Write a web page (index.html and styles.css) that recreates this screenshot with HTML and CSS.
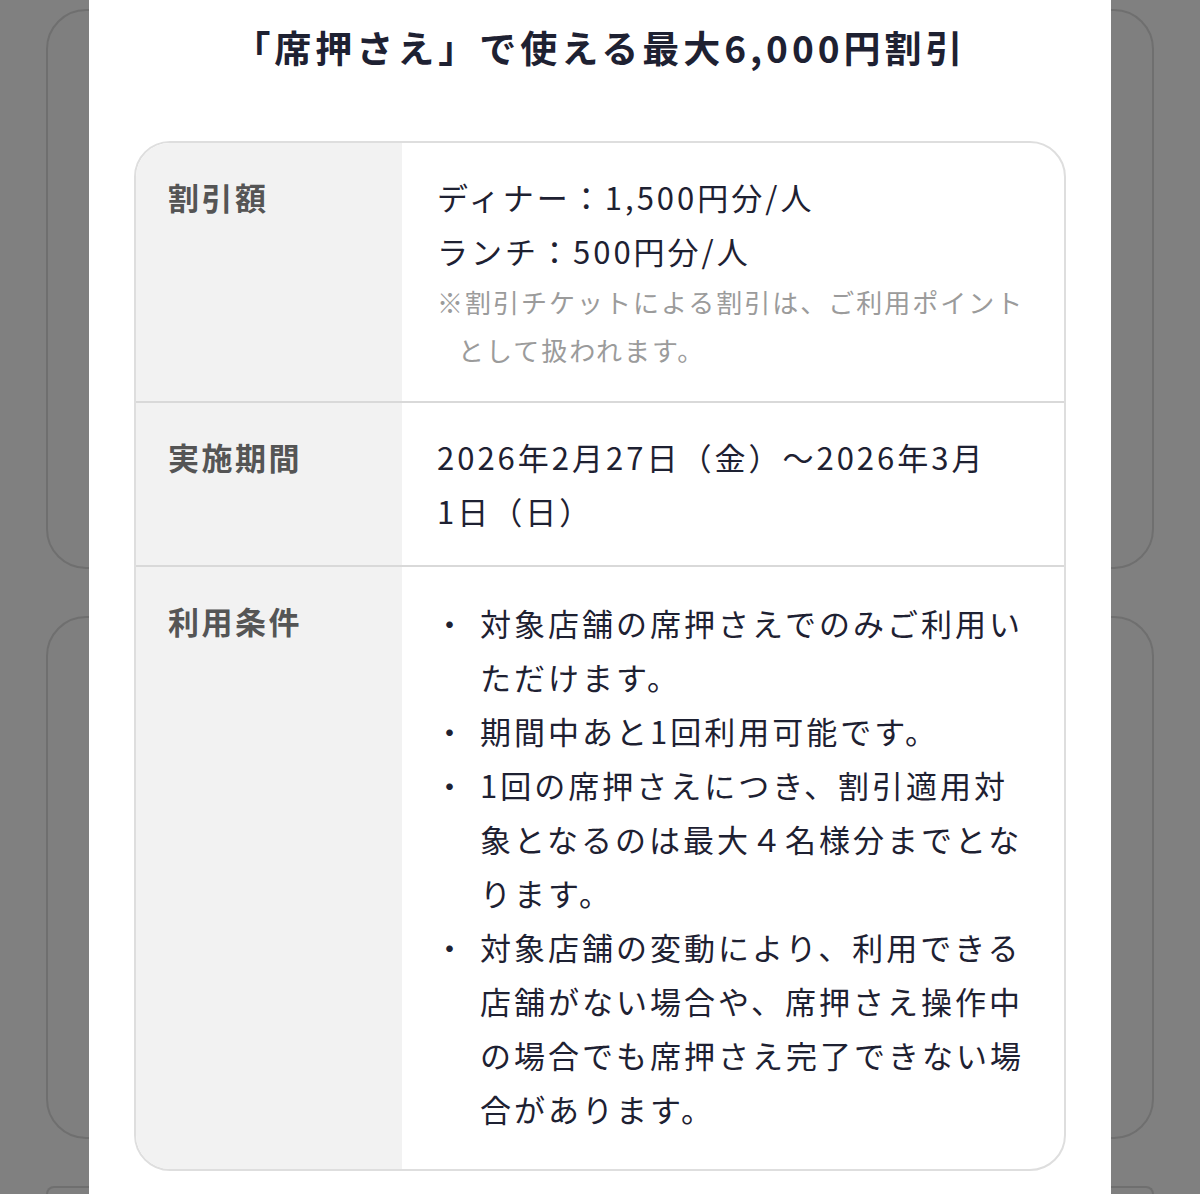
FILE: index.html
```html
<!DOCTYPE html>
<html lang="ja">
<head>
    <meta charset="UTF-8">
    <meta name="viewport" content="width=device-width, initial-scale=1.0">
    <title>席押さえ割引</title>
    <link rel="stylesheet" href="styles.css">
</head>
<body>
    <!-- 背面のクーポン一覧 -->
    <div class="page">
        <div class="coupon-card tall"></div>
        <div class="coupon-card"></div>
        <div class="coupon-card short"></div>
    </div>

    <!-- 割引詳細モーダル -->
    <div class="modal">
        <h1 class="modal-title">「席押さえ」で使える最大6,000円割引</h1>

        <div class="detail-table">
            <div class="detail-row">
                <div class="detail-label">割引額</div>
                <div class="detail-value">
                    <p>ディナー：1,500円分/人</p>
                    <p>ランチ：500円分/人</p>
                    <p class="note">※割引チケットによる割引は、ご利用ポイントとして扱われます。</p>
                </div>
            </div>
            <div class="detail-row">
                <div class="detail-label">実施期間</div>
                <div class="detail-value">
                    <p>2026年2月27日（金）～2026年3月<span class="nowrap">1日</span>（日）</p>
                </div>
            </div>
            <div class="detail-row">
                <div class="detail-label">利用条件</div>
                <div class="detail-value">
                    <ul class="terms">
                        <li>対象店舗の席押さえでのみご利用いただけます。</li>
                        <li>期間中あと1回利用可能です。</li>
                        <li>1回の席押さえにつき、割引適用対象となるのは最大４名様分までとなります。</li>
                        <li>対象店舗の変動により、利用できる店舗がない場合や、席押さえ操作中の場合でも席押さえ完了できない場合があります。</li>
                    </ul>
                </div>
            </div>
        </div>
    </div>
</body>
</html>
```

FILE: styles.css
```css
* {
    margin: 0;
    padding: 0;
    box-sizing: border-box;
    font-family: "Noto Sans CJK JP", "Noto Sans", sans-serif;
}

html,
body {
    height: 1194px;
    overflow: hidden;
}

body {
    background: #808080;
}

/* 背面のカード一覧 */
.page {
    display: flex;
    flex-direction: column;
    gap: 47px;
    padding: 9px 46px 0;
}

.coupon-card {
    height: 523px;
    border: 2px solid #6f6f6f;
    border-radius: 40px;
    background: #7f7f7f;
}

.coupon-card.tall {
    height: 560px;
}

.coupon-card.short {
    height: 8px;
    border-bottom: none;
    border-radius: 40px 40px 0 0;
}

/* モーダル */
.modal {
    position: fixed;
    top: 0;
    bottom: 0;
    left: 89px;
    width: 1022px;
    background: #fff;
    padding: 23px 45px 0;
}

.modal-title {
    text-align: center;
    font-size: 37px;
    font-weight: 700;
    line-height: 48px;
    letter-spacing: 4px;
    color: #1e2132;
    margin-bottom: 70px;
}

.detail-table {
    border: 2px solid #dedede;
    border-radius: 36px;
    overflow: hidden;
}

.detail-row {
    display: grid;
    grid-template-columns: 266px 1fr;
}

.detail-row + .detail-row {
    border-top: 2px solid #d9d9d9;
}

.detail-label,
.detail-value {
    padding: 27px 34px 27px 32px;
    font-size: 31px;
    line-height: 54px;
    letter-spacing: 3px;
}

.detail-label {
    background: #f2f2f2;
    font-weight: 700;
    color: #555;
    letter-spacing: 2.5px;
}

.detail-value {
    padding-left: 35px;
    color: #1e2132;
}

.nowrap {
    white-space: nowrap;
}

.note {
    font-size: 26px;
    line-height: 48px;
    letter-spacing: 2px;
    color: #9b9b9b;
    padding-left: 21px;
    text-indent: -21px;
}

.terms {
    list-style: none;
}

.terms li {
    display: flex;
}

.terms li::before {
    content: "・";
    flex: 0 0 46px;
    margin-left: -3px;
}

.detail-row:last-child .detail-value {
    padding-top: 29px;
    padding-bottom: 33px;
}
```
